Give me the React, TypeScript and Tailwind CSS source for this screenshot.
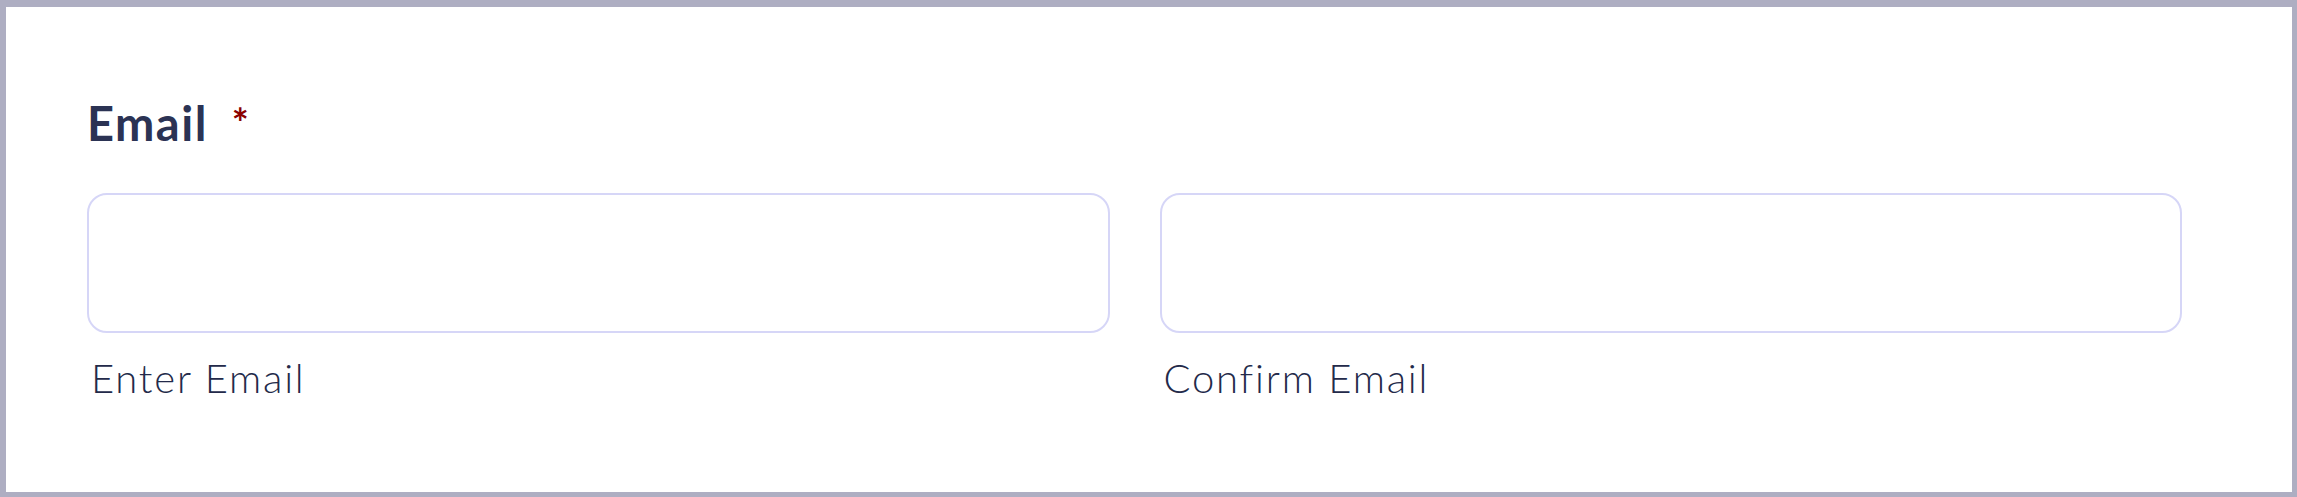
export default function App() {
  return (
    <div className="w-[2297px] h-[497px] bg-white border-[#aeaec2] border-t-[7px] border-l-[6px] border-r-[5px] border-b-[5px] font-['Lato',sans-serif] text-[#2b3354]">
      <div className="pl-[81px] pr-[110px] pt-[93px]">
        {/* Label */}
        <div className="flex items-start">
          <span className="text-[47px] leading-[47px] font-bold tracking-[1.5px]">Email</span>
          <span className="ml-[24px] mt-[3px] text-[40px] leading-[40px] font-bold text-[#8b0000]">*</span>
        </div>

        {/* Inputs */}
        <div className="mt-[46px] grid grid-cols-2 gap-[50px]">
          {['Enter Email', 'Confirm Email'].map((label) => (
            <div key={label} className="flex flex-col">
              <input
                type="email"
                className="h-[140px] w-full rounded-[20px] border-2 border-[#d6d6f7] bg-white outline-none"
              />
              <span className="mt-[25px] pl-[4px] text-[40px] leading-[40px] font-light tracking-[1.8px] text-[#232a4a]">
                {label}
              </span>
            </div>
          ))}
        </div>
      </div>
    </div>
  )
}
